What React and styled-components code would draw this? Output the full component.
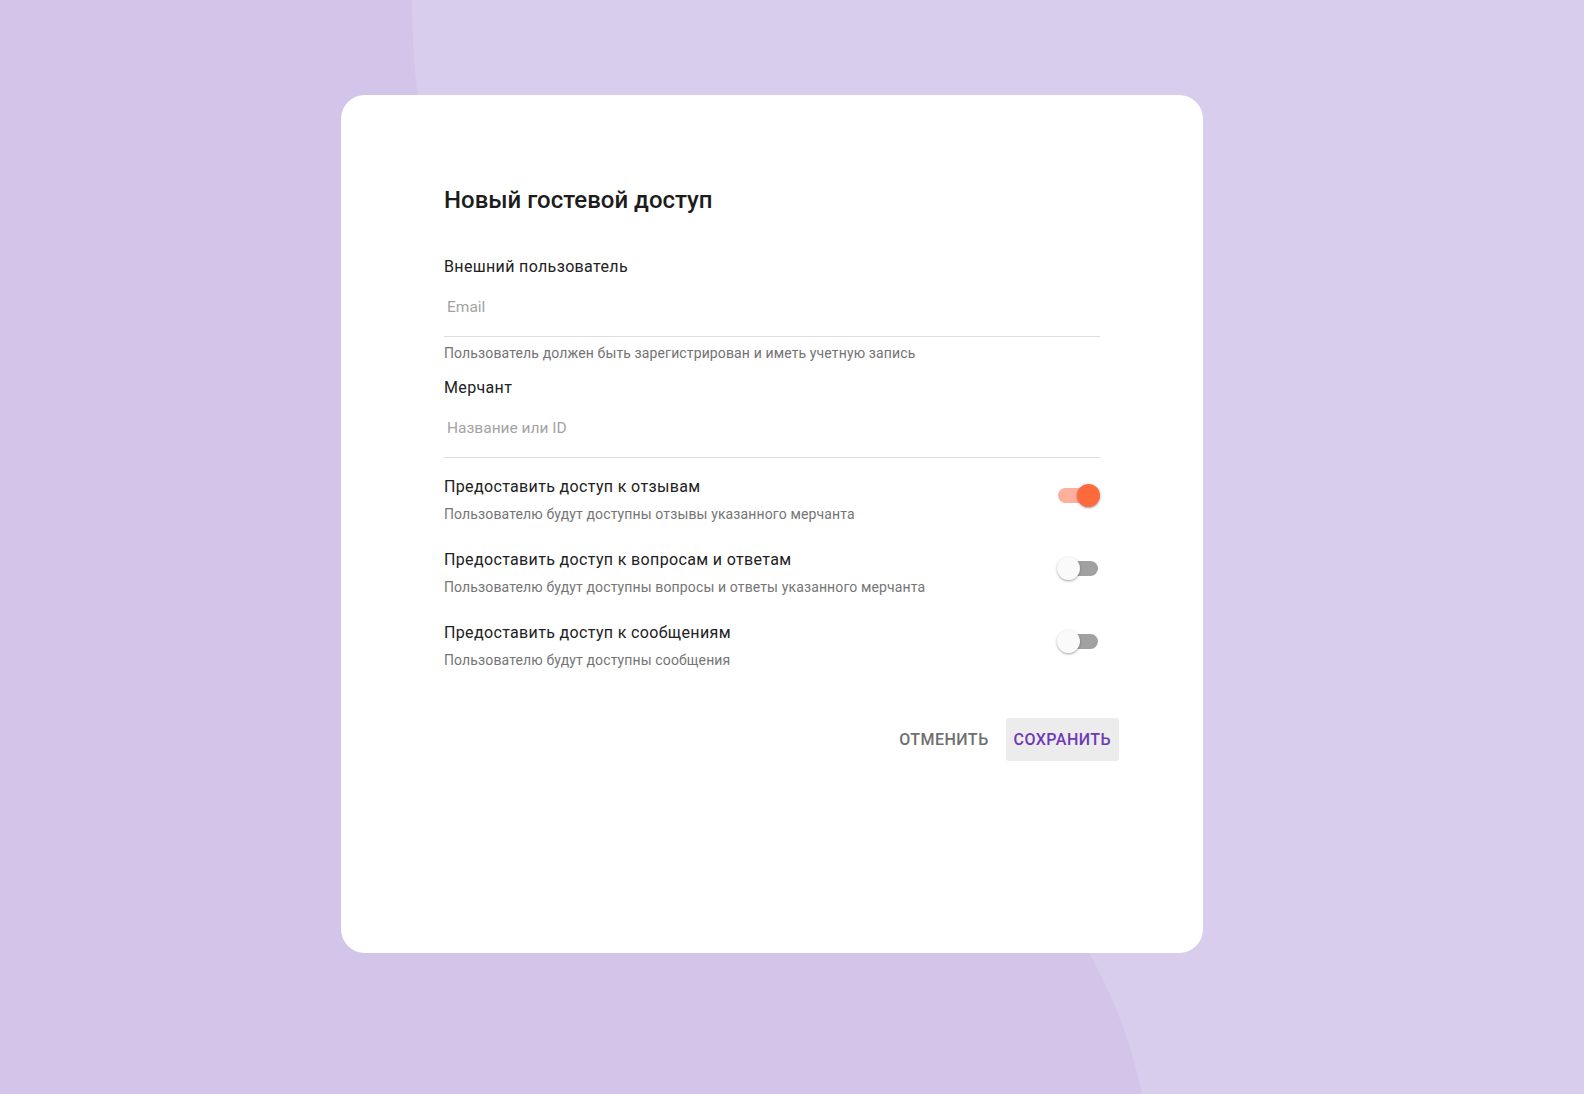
import styled, { createGlobalStyle } from "styled-components";

const GlobalStyle = createGlobalStyle`
    html, body {
        margin: 0;
        padding: 0;
        background: #d3c5e9;
        font-family: Roboto, "Noto Sans", "Liberation Sans", sans-serif;
    }
    * {
        box-sizing: border-box;
    }
`;

const permissions = [
    {
        title: "Предоставить доступ к отзывам",
        text: "Пользователю будут доступны отзывы указанного мерчанта",
        on: true,
    },
    {
        title: "Предоставить доступ к вопросам и ответам",
        text: "Пользователю будут доступны вопросы и ответы указанного мерчанта",
        on: false,
    },
    {
        title: "Предоставить доступ к сообщениям",
        text: "Пользователю будут доступны сообщения",
        on: false,
    },
];

const App = () => {
    return (
        <Page>
            <GlobalStyle />
            <Backdrop viewBox="0 0 1584 1094" preserveAspectRatio="none">
                <path
                    d="M412 0 C412 600 1050 650 1142 1094 L1584 1094 L1584 0 Z"
                    fill="#d8cdec"
                />
            </Backdrop>
            <Card>
                <Title>Новый гостевой доступ</Title>

                <Label>Внешний пользователь</Label>
                <Input placeholder="Email" />
                <Helper>Пользователь должен быть зарегистрирован и иметь учетную запись</Helper>

                <Label>Мерчант</Label>
                <Input placeholder="Название или ID" />

                <Rows>
                    {permissions.map((p) => (
                        <Row key={p.title}>
                            <RowText>
                                <RowTitle>{p.title}</RowTitle>
                                <RowDesc>{p.text}</RowDesc>
                            </RowText>
                            <Switch $on={p.on}>
                                <Track $on={p.on} />
                                <Thumb $on={p.on} />
                            </Switch>
                        </Row>
                    ))}
                </Rows>

                <Actions>
                    <Button>Отменить</Button>
                    <Button $primary>Сохранить</Button>
                </Actions>
            </Card>
        </Page>
    );
};

const Page = styled.div`
    position: relative;
    min-height: 1094px;
    padding: 95px 0 0 341px;
    overflow: hidden;
`;

const Backdrop = styled.svg`
    position: absolute;
    top: 0;
    left: 0;
    width: 1584px;
    height: 1094px;
    z-index: 0;
`;

const Card = styled.section`
    position: relative;
    z-index: 1;
    width: 862px;
    height: 858px;
    background: #ffffff;
    border-radius: 24px;
    padding: 89px 103px 0 103px;
    display: flex;
    flex-direction: column;
`;

const Title = styled.h2`
    margin: 0 0 39px;
    font-size: 24px;
    line-height: 32px;
    font-weight: 500;
    color: #1c1c1c;
`;

const Label = styled.div`
    font-size: 16px;
    line-height: 24px;
    letter-spacing: 0.35px;
    color: #212121;
`;

const Input = styled.input`
    width: 100%;
    height: 58px;
    border: none;
    border-bottom: 1px solid #dedede;
    padding: 0 3px 1px;
    font-family: inherit;
    font-size: 15.5px;
    color: #212121;
    outline: none;
    background: transparent;

    &::placeholder {
        color: #a3a3a3;
    }
`;

const Helper = styled.div`
    margin: 6px 0 13px;
    font-size: 14px;
    line-height: 20px;
    letter-spacing: 0.13px;
    color: #737373;
`;

const Rows = styled.div`
    display: flex;
    flex-direction: column;
    gap: 24px;
    margin-top: 17px;
`;

const Row = styled.div`
    display: flex;
    justify-content: space-between;
    align-items: flex-start;
`;

const RowText = styled.div`
    display: flex;
    flex-direction: column;
    gap: 5px;
`;

const RowTitle = styled.div`
    font-size: 16px;
    line-height: 24px;
    letter-spacing: 0.35px;
    color: #212121;
`;

const RowDesc = styled.div`
    font-size: 14px;
    line-height: 20px;
    letter-spacing: 0.13px;
    color: #757575;
`;

const Switch = styled.div`
    position: relative;
    width: 43px;
    height: 23px;
    margin-top: 9px;
    flex-shrink: 0;
`;

const Track = styled.div`
    position: absolute;
    left: 1px;
    top: 4px;
    width: 40px;
    height: 15px;
    border-radius: 8px;
    background: ${(p) => (p.$on ? "#ffb09d" : "#a1a1a1")};
`;

const Thumb = styled.div`
    position: absolute;
    top: 0;
    left: ${(p) => (p.$on ? "20px" : "0")};
    width: 23px;
    height: 23px;
    border-radius: 50%;
    background: ${(p) => (p.$on ? "#ff6a3d" : "#fafafa")};
    box-shadow: 0 1px 3px rgba(0, 0, 0, 0.25), 0 1px 1px rgba(0, 0, 0, 0.12);
`;

const Actions = styled.div`
    display: flex;
    justify-content: flex-end;
    gap: 9px;
    margin: 48px -19px 0 0;
`;

const Button = styled.button`
    height: 43px;
    padding: 0 8px;
    border: none;
    border-radius: 3px;
    font-family: inherit;
    font-size: 16px;
    font-weight: 500;
    text-transform: uppercase;
    letter-spacing: 0.45px;
    color: ${(p) => (p.$primary ? "#6c3ab5" : "#6f6f6f")};
    background: ${(p) => (p.$primary ? "#ececec" : "transparent")};
    cursor: pointer;
`;

export default App;
